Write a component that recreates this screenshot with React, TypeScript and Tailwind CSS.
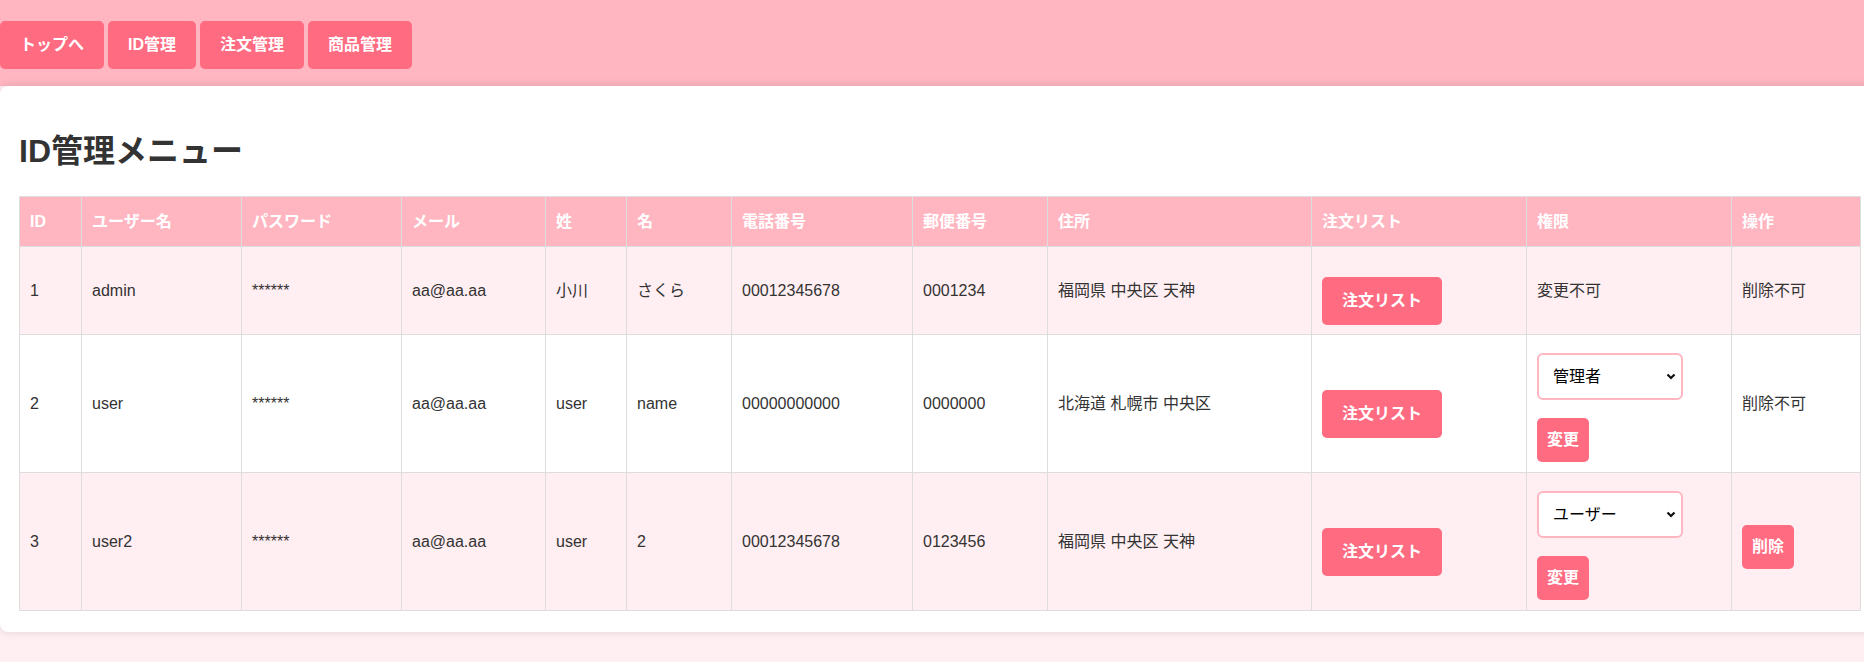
import React from "react";

const font = "font-['Liberation_Sans','Noto_Sans_CJK_JP',sans-serif]";

type Row = {
    id: number;
    user: string;
    mail: string;
    sei: string;
    mei: string;
    tel: string;
    zip: string;
    addr: string;
    role: string | null;
    canDelete: boolean;
};

const rows: Row[] = [
    { id: 1, user: "admin", mail: "aa@aa.aa", sei: "小川", mei: "さくら", tel: "00012345678", zip: "0001234", addr: "福岡県 中央区 天神", role: null, canDelete: false },
    { id: 2, user: "user", mail: "aa@aa.aa", sei: "user", mei: "name", tel: "00000000000", zip: "0000000", addr: "北海道 札幌市 中央区", role: "管理者", canDelete: false },
    { id: 3, user: "user2", mail: "aa@aa.aa", sei: "user", mei: "2", tel: "00012345678", zip: "0123456", addr: "福岡県 中央区 天神", role: "ユーザー", canDelete: true },
];

const headers = ["ID", "ユーザー名", "パスワード", "メール", "姓", "名", "電話番号", "郵便番号", "住所", "注文リスト", "権限", "操作"];
const widths = ["w-[62px]", "w-[160px]", "w-[160px]", "w-[144px]", "w-[81px]", "w-[105px]", "w-[181px]", "w-[135px]", "w-[264px]", "w-[215px]", "w-[205px]", "w-[129px]"];

const td = "border border-[#ddd] px-[10px] py-0 align-middle text-[16px] leading-6 text-[#333]";

const RoleSelect = ({ value }: { value: string }) => (
    <div className="relative w-[146px] h-[47px]">
        <select
            defaultValue={value}
            className="appearance-none w-full h-full bg-white border-2 border-[#ffb6c1] rounded-[6px] pl-[14px] text-[16px] text-black outline-none"
        >
            <option value="管理者">管理者</option>
            <option value="ユーザー">ユーザー</option>
        </select>
        {/* chevron */}
        <svg className="absolute right-[7px] top-[20px] pointer-events-none" width="10" height="7" viewBox="0 0 10 7">
            <path d="M1.5 1.5 L5 5 L8.5 1.5" fill="none" stroke="#111" strokeWidth="2.2" />
        </svg>
    </div>
);

const App = () => {
    return (
        <div className={`${font} w-full min-h-[662px] overflow-hidden bg-[#ffeef2]`}>
            {/* Nav */}
            <div className="h-[86px] bg-[#ffb6c1] flex items-start gap-[4px] pt-[21px]">
                {["トップへ", "ID管理", "注文管理", "商品管理"].map((label) => (
                    <button
                        key={label}
                        className="h-[48px] px-[20px] rounded-[5px] bg-[#ff6b81] text-white font-bold text-[16px] leading-6"
                    >
                        {label}
                    </button>
                ))}
            </div>

            {/* Card */}
            <div className="w-[1880px] bg-white rounded-[8px] shadow-[0_0_10px_rgba(0,0,0,0.12)] pl-[19px] pt-[20px] pb-[21px]">
                <h1 className="text-[32px] leading-[48px] font-bold text-[#333] mt-[21px] mb-[21px]">ID管理メニュー</h1>

                <table className="w-[1841px] table-fixed border-collapse">
                    <colgroup>
                        {widths.map((w, i) => (
                            <col key={i} className={w} />
                        ))}
                    </colgroup>
                    <thead>
                        <tr className="h-[50px] bg-[#ffb6c1]">
                            {headers.map((h) => (
                                <th key={h} className="border border-[#ddd] px-[10px] text-left text-white font-bold text-[16px] leading-6">
                                    {h}
                                </th>
                            ))}
                        </tr>
                    </thead>
                    <tbody>
                        {rows.map((r, idx) => (
                            <tr
                                key={r.id}
                                className={`${idx === 0 ? "h-[88px]" : "h-[138px]"} ${idx % 2 === 0 ? "bg-[#ffeef2]" : "bg-white"}`}
                            >
                                <td className={td}>{r.id}</td>
                                <td className={td}>{r.user}</td>
                                <td className={td}>******</td>
                                <td className={td}>{r.mail}</td>
                                <td className={td}>{r.sei}</td>
                                <td className={td}>{r.mei}</td>
                                <td className={td}>{r.tel}</td>
                                <td className={td}>{r.zip}</td>
                                <td className={td}>{r.addr}</td>
                                <td className={td}>
                                    <div className="flex flex-col items-start">
                                        <button className="mt-[20px] h-[48px] px-[20px] rounded-[5px] bg-[#ff6b81] text-white font-bold text-[16px] leading-6">
                                            注文リスト
                                        </button>
                                    </div>
                                </td>
                                <td className={td}>
                                    {r.role ? (
                                        <div className="flex flex-col items-start pt-[8px]">
                                            <RoleSelect value={r.role} />
                                            <button className="mt-[18px] h-[44px] px-[10px] rounded-[5px] bg-[#ff6b81] text-white font-bold text-[16px] leading-6">
                                                変更
                                            </button>
                                        </div>
                                    ) : (
                                        "変更不可"
                                    )}
                                </td>
                                <td className={td}>
                                    {r.canDelete ? (
                                        <div className="flex flex-col items-start">
                                            <button className="mt-[10px] h-[44px] px-[10px] rounded-[5px] bg-[#ff6b81] text-white font-bold text-[16px] leading-6">
                                                削除
                                            </button>
                                        </div>
                                    ) : (
                                        "削除不可"
                                    )}
                                </td>
                            </tr>
                        ))}
                    </tbody>
                </table>
            </div>
        </div>
    );
};

export default App;
